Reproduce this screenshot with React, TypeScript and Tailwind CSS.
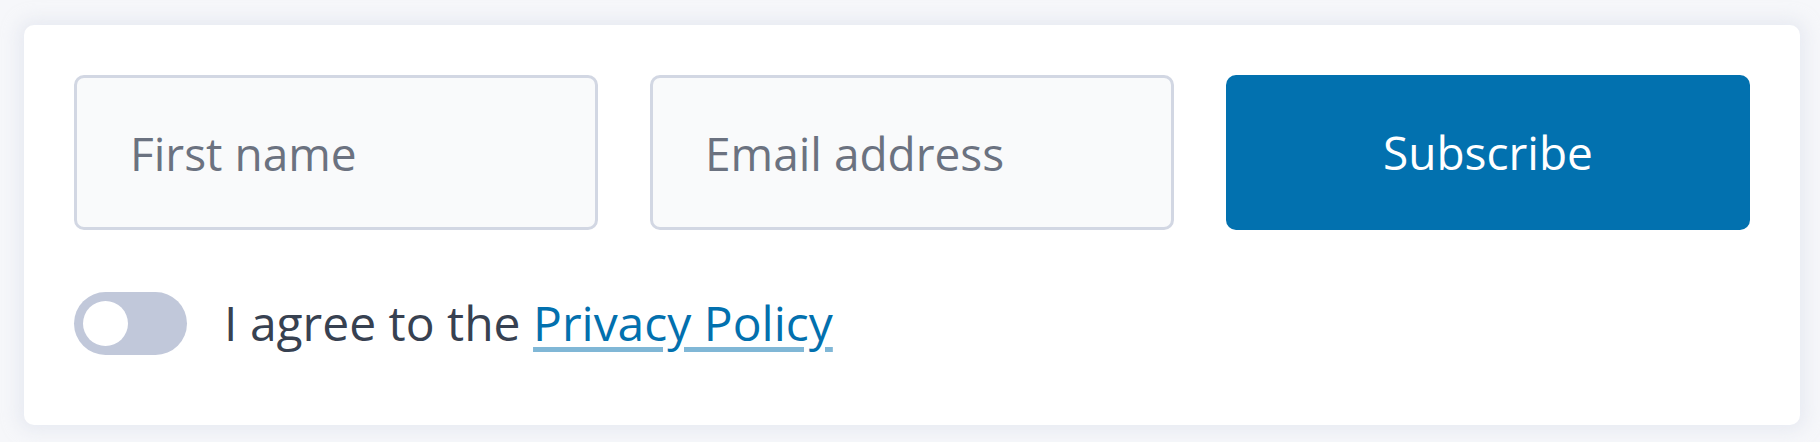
export default function App() {
  return (
    <div className="w-[1820px] h-[442px] bg-[#f6f7fa] pt-[25px] pl-[24px] font-['Open_Sans',sans-serif]">
      <div className="w-[1776px] h-[400px] bg-white rounded-[10px] shadow-[0_0_16px_6px_rgba(220,223,235,0.5)] px-[50px] pt-[50px] flex flex-col">
        <form className="grid grid-cols-3 gap-[52px] h-[155px]" onSubmit={(e) => e.preventDefault()}>
          <input
            type="text"
            placeholder="First name"
            className="h-full border-[3px] border-[#d2d7e3] rounded-[10px] bg-[#f9fafb] pl-[53px] text-[46px] text-gray-700 placeholder:text-[#6b7280] outline-none"
          />
          <input
            type="email"
            placeholder="Email address"
            className="h-full border-[3px] border-[#d2d7e3] rounded-[10px] bg-[#f9fafb] pl-[52px] text-[46px] text-gray-700 placeholder:text-[#6b7280] outline-none"
          />
          <button type="submit" className="h-full rounded-[10px] bg-[#0271af] text-white text-[46px]">
            Subscribe
          </button>
        </form>

        <div className="mt-[57px] flex items-center h-[72px]">
          <div className="w-[113px] h-[63px] rounded-full bg-[#c1c8da] flex items-center pl-[9px]">
            <div className="w-[45px] h-[45px] rounded-full bg-white" />
          </div>
          <span className="ml-[37px] text-[48px] text-[#374151]">
            I agree to the{" "}
            <a href="#" className="text-[#0270ae] underline decoration-[#0270ae]/50 decoration-[5px] underline-offset-[6px]">
              Privacy Policy
            </a>
          </span>
        </div>
      </div>
    </div>
  )
}
